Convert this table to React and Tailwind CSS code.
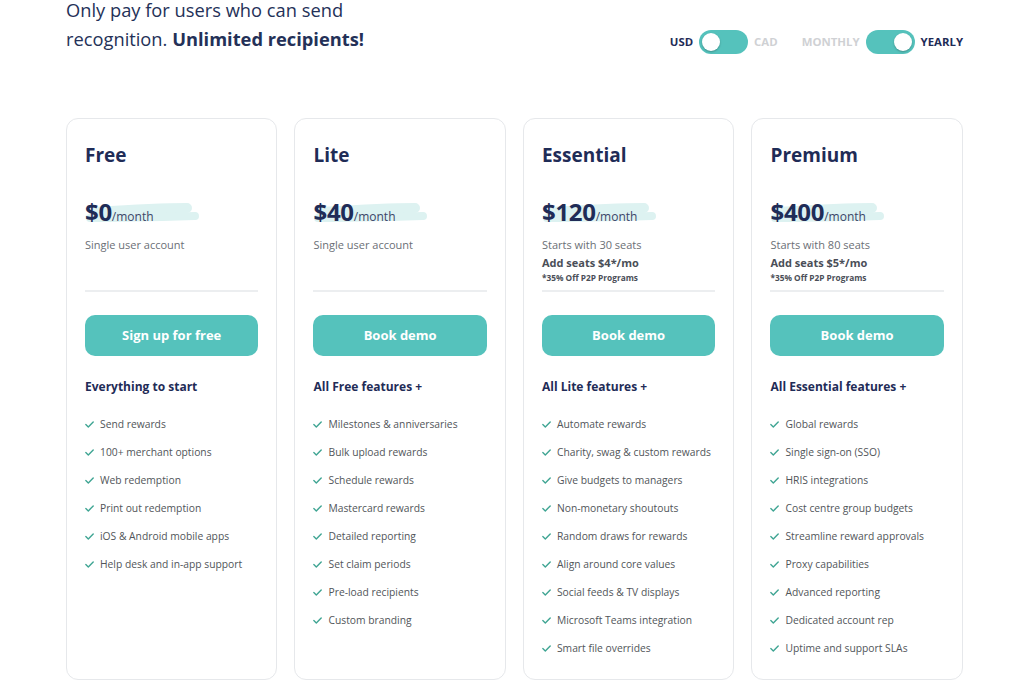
import React from "react";

const plans = [
  {
    name: "Free",
    price: "$0",
    sub: "Single user account",
    button: "Sign up for free",
    heading: "Everything to start",
    features: [
      "Send rewards",
      "100+ merchant options",
      "Web redemption",
      "Print out redemption",
      "iOS & Android mobile apps",
      "Help desk and in-app support",
    ],
  },
  {
    name: "Lite",
    price: "$40",
    sub: "Single user account",
    button: "Book demo",
    heading: "All Free features +",
    features: [
      "Milestones & anniversaries",
      "Bulk upload rewards",
      "Schedule rewards",
      "Mastercard rewards",
      "Detailed reporting",
      "Set claim periods",
      "Pre-load recipients",
      "Custom branding",
    ],
  },
  {
    name: "Essential",
    price: "$120",
    sub: "Starts with 30 seats",
    seats: "Add seats $4*/mo",
    button: "Book demo",
    heading: "All Lite features +",
    features: [
      "Automate rewards",
      "Charity, swag & custom rewards",
      "Give budgets to managers",
      "Non-monetary shoutouts",
      "Random draws for rewards",
      "Align around core values",
      "Social feeds & TV displays",
      "Microsoft Teams integration",
      "Smart file overrides",
    ],
  },
  {
    name: "Premium",
    price: "$400",
    sub: "Starts with 80 seats",
    seats: "Add seats $5*/mo",
    button: "Book demo",
    heading: "All Essential features +",
    features: [
      "Global rewards",
      "Single sign-on (SSO)",
      "HRIS integrations",
      "Cost centre group budgets",
      "Streamline reward approvals",
      "Proxy capabilities",
      "Advanced reporting",
      "Dedicated account rep",
      "Uptime and support SLAs",
    ],
  },
];

function Toggle({ on }) {
  return (
    <div
      className={`flex h-[24px] w-[49px] items-center rounded-full bg-[#55c2bc] px-[3px] ${
        on ? "justify-end" : "justify-start"
      }`}
    >
      <div className="h-[18px] w-[18px] rounded-full bg-white shadow-[0_1px_2px_rgba(0,0,0,0.25)]" />
    </div>
  );
}

function Check() {
  return (
    <svg width="9" height="7" viewBox="0 0 9 7" className="shrink-0">
      <path
        d="M0.8 3.6 L3.3 5.9 L8.2 0.9"
        fill="none"
        stroke="#3fa593"
        strokeWidth="1.4"
        strokeLinecap="round"
        strokeLinejoin="round"
      />
    </svg>
  );
}

// brush-stroke highlight behind the price
function Brush() {
  return (
    <svg
      className="absolute left-0 top-[4px]"
      width="116"
      height="22"
      viewBox="0 0 116 22"
    >
      <path
        d="M9 10 C40 8, 70 6, 102 6"
        fill="none"
        stroke="#ddf2f1"
        strokeWidth="10"
        strokeLinecap="round"
      />
      <path
        d="M5 16 C40 16, 75 15, 110 14"
        fill="none"
        stroke="#ddf2f1"
        strokeWidth="8"
        strokeLinecap="round"
      />
    </svg>
  );
}

function PlanCard({ plan }) {
  return (
    <div className="flex h-[562px] w-[211.3px] flex-col rounded-[12px] border border-[#e6e8eb] bg-white px-[18px] pt-[24px]">
      <h3 className="text-[19px] font-bold leading-[24px] text-[#1f2c57]">
        {plan.name}
      </h3>
      <div className="relative mt-[31px] h-[28px]">
        <Brush />
        <div className="relative flex items-baseline text-[#1f2c57]">
          <span className="text-[24px] font-bold leading-[28px] tracking-[-0.3px]">
            {plan.price}
          </span>
          <span className="text-[12px] leading-[14px] text-[#3b4668]">/month</span>
        </div>
      </div>
      <div className="mt-[11px] h-[53px]">
        <p className="text-[11px] leading-[16px] text-[#6b6f76]">{plan.sub}</p>
        {plan.seats && (
          <>
            <p className="mt-[2px] text-[11px] font-bold leading-[16px] text-[#4a4e57]">
              {plan.seats}
            </p>
            <p className="text-[8.3px] font-bold leading-[14px] text-[#4a4e57]">
              *35% Off P2P Programs
            </p>
          </>
        )}
      </div>
      <div className="h-[2px] bg-[#eceef0]" />
      <button className="mt-[23px] h-[41px] w-full rounded-[10px] bg-[#55c2bc] text-[13px] font-bold text-white">
        {plan.button}
      </button>
      <p className="mt-[23px] text-[12px] font-bold leading-[16px] text-[#1f2c57]">
        {plan.heading}
      </p>
      <ul className="mt-[21px] flex flex-col gap-[12px]">
        {plan.features.map((f) => (
          <li key={f} className="flex h-[16px] items-center gap-[6px]">
            <Check />
            <span className="text-[10.3px] leading-[16px] text-[#515559]">{f}</span>
          </li>
        ))}
      </ul>
    </div>
  );
}

export default function App() {
  return (
    <div
      className="h-[685px] w-[1024px] overflow-hidden bg-white"
      style={{ fontFamily: '"Open Sans", "Noto Sans", sans-serif' }}
    >
      <div className="flex h-[84px] items-start justify-between pl-[66px] pr-[61px]">
        <h2 className="-mt-[5px] text-[18.3px] leading-[29px] text-[#243158]">
          Only pay for users who can send
          <br />
          recognition. <span className="font-bold">Unlimited recipients!</span>
        </h2>
        <div className="mt-[30px] flex items-center text-[11.4px] font-bold">
          <span className="text-[#1f2c57]">USD</span>
          <div className="mx-[6px]">
            <Toggle on={false} />
          </div>
          <span className="text-[#cfd1d4]">CAD</span>
          <span className="ml-[24px] text-[#cfd1d4]">MONTHLY</span>
          <div className="mx-[6px]">
            <Toggle on={true} />
          </div>
          <span className="text-[#1f2c57]">YEARLY</span>
        </div>
      </div>
      <div className="mt-[34px] flex gap-[17.2px] pl-[66px]">
        {plans.map((p) => (
          <PlanCard key={p.name} plan={p} />
        ))}
      </div>
    </div>
  );
}
